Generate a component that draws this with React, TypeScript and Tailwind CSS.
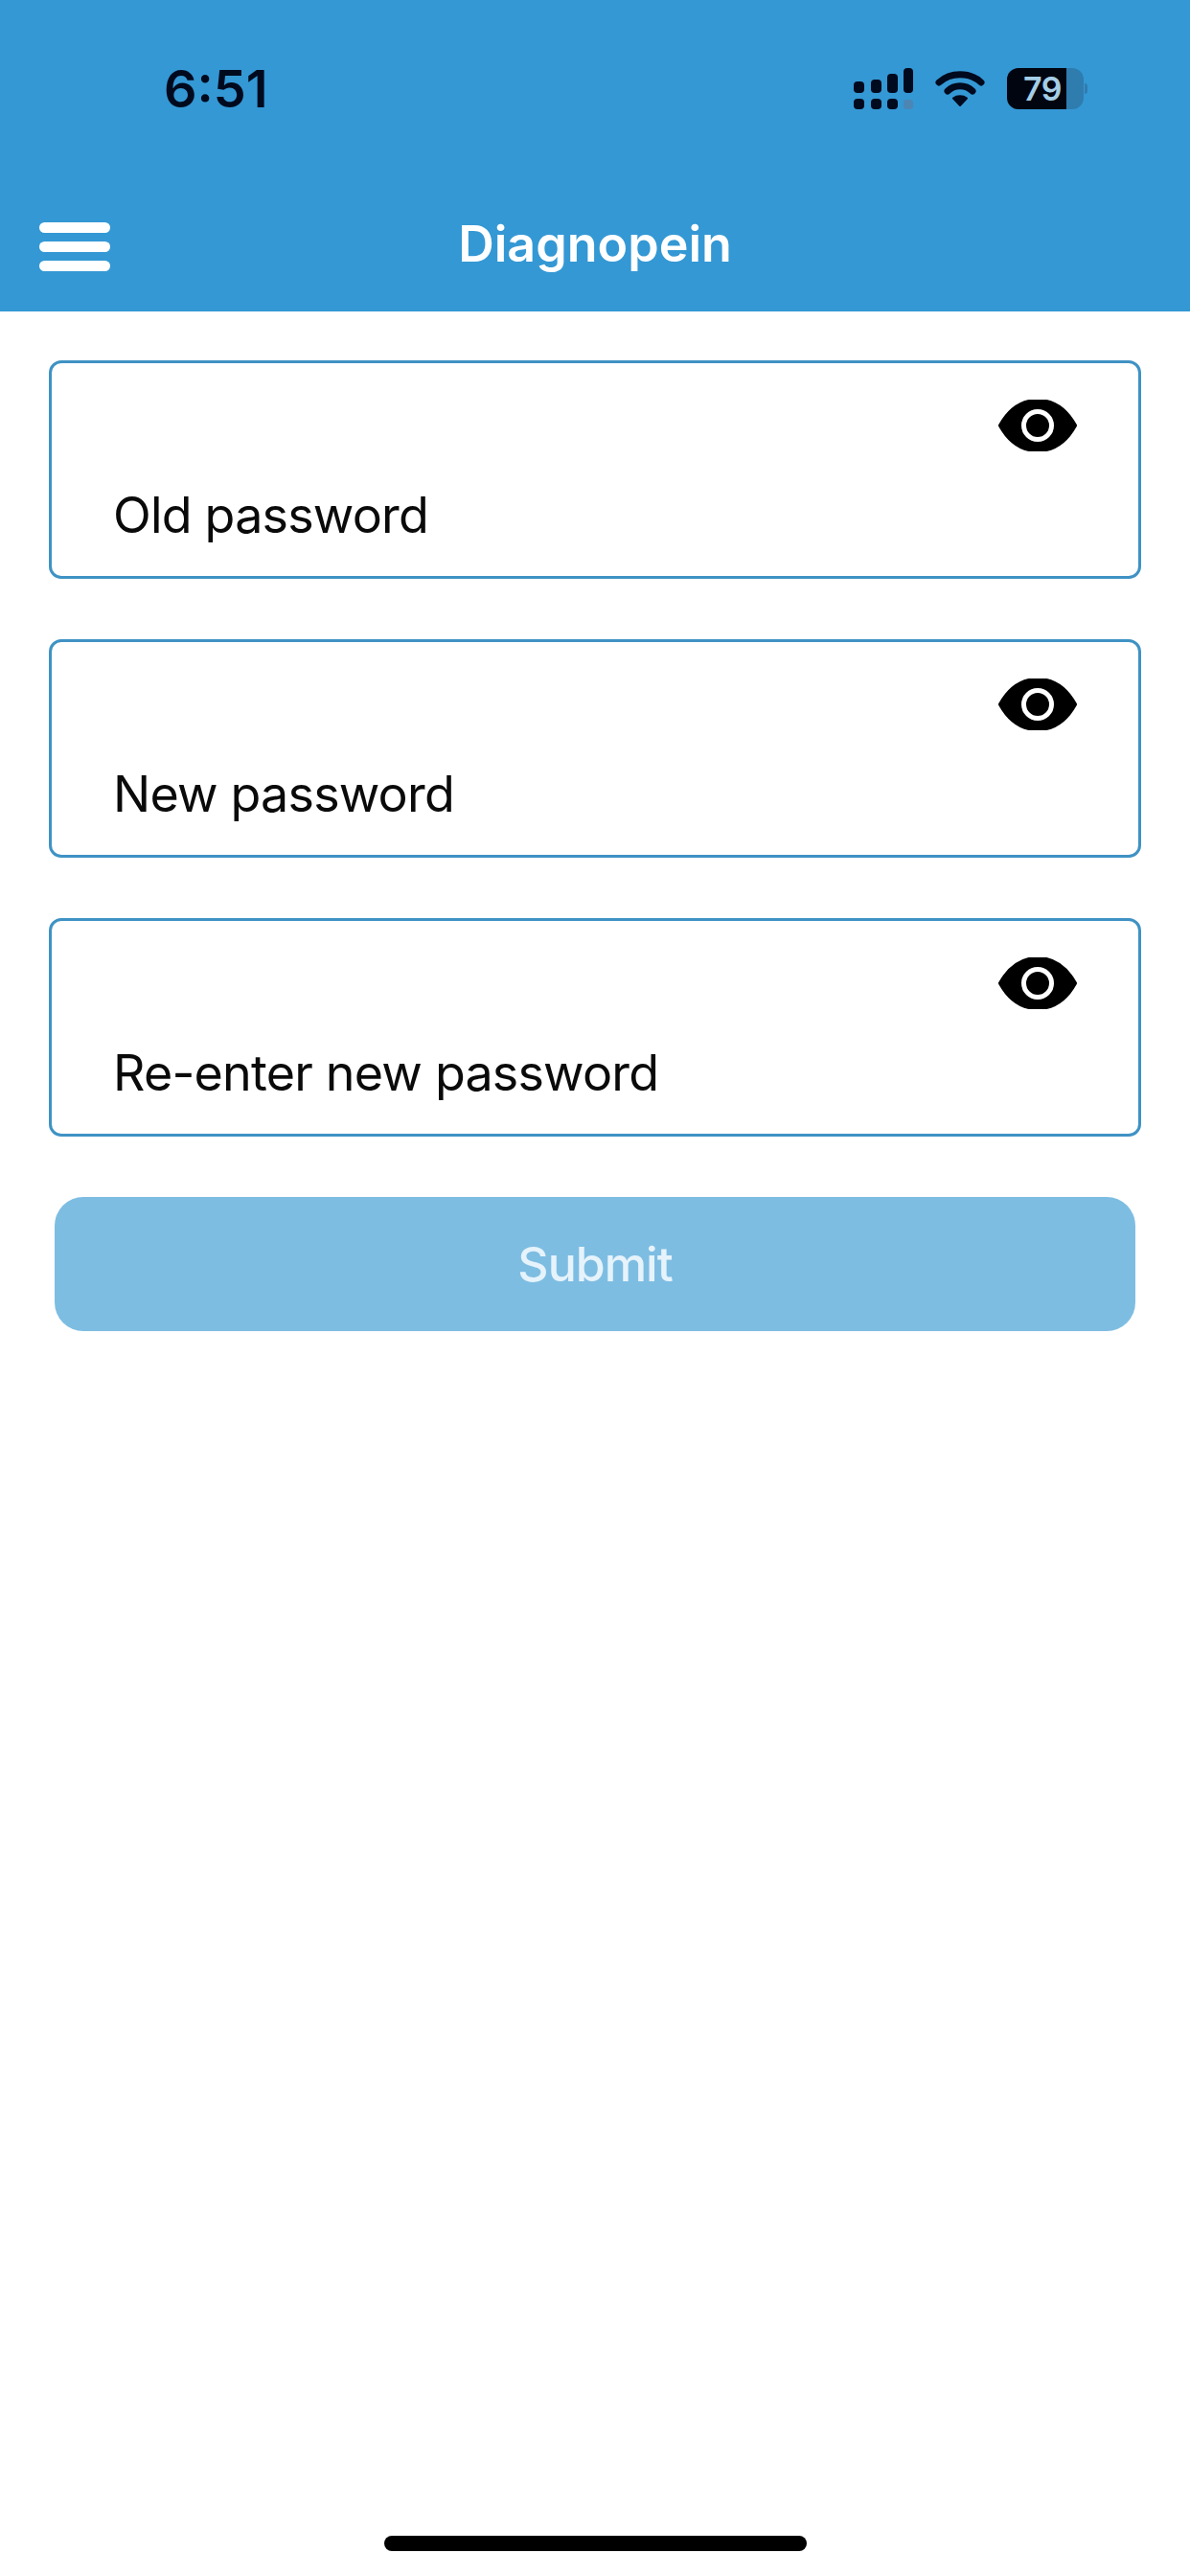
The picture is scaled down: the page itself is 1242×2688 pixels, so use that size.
import React from 'react';

const fields = ['Old password', 'New password', 'Re-enter new password'];

const EyeIcon = () => (
  <svg width="82" height="54" viewBox="0 0 82 54">
    <path d="M2 27 C12 9 26 1 41 1 C56 1 70 9 80 27 C70 45 56 53 41 53 C26 53 12 45 2 27 Z" fill="#000" stroke="#000" strokeLinejoin="round" strokeWidth="4" />
    <circle cx="41" cy="27" r="14.5" fill="none" stroke="#fff" strokeWidth="5" />
  </svg>
);

const SignalIcon = () => (
  <svg width="62" height="43" viewBox="0 0 62 43" fill="#000a1e">
    <rect x="0" y="14" width="11" height="12" rx="4" />
    <rect x="18" y="12" width="11" height="14" rx="4" />
    <rect x="35" y="6" width="11" height="20" rx="4" />
    <rect x="52" y="0" width="10" height="26" rx="4" />
    <rect x="0" y="32" width="11" height="11" rx="4" />
    <rect x="18" y="32" width="11" height="11" rx="4" />
    <rect x="35" y="32" width="11" height="11" rx="4" />
    <rect x="52" y="33" width="10" height="10" rx="3" fill="#4c86b4" />
  </svg>
);

const WifiIcon = () => (
  <svg width="52" height="39" viewBox="0 0 52 39" fill="none" stroke="#000a1e" strokeWidth="7" strokeLinecap="round">
    <path d="M4 13 C16 2 36 2 48 13" />
    <path d="M13 22 C20 15 32 15 39 22" />
    <path d="M26 37 L19 29.5 C23 26.5 29 26.5 33 29.5 Z" fill="#000a1e" stroke="#000a1e" strokeWidth="2" strokeLinejoin="round" />
  </svg>
);

const BatteryIcon = () => (
  <div className="flex items-center">
    <div className="flex h-[43px] w-[80px] overflow-hidden rounded-[12px] bg-[#2f7cae]">
      <div className="flex w-[62px] items-center justify-end bg-[#000510] pr-[5px] text-[34px] font-semibold tracking-[-0.5px] text-[#a5cde6]">
        79
      </div>
    </div>
    <div className="ml-[1px] h-[11px] w-[3px] rounded-r-full bg-[#2f7cae]" />
  </div>
);

export default function App() {
  return (
    <div className="flex min-h-[2688px] flex-col bg-white [font-family:Inter,'Liberation_Sans',sans-serif]">
      <header className="h-[325px] bg-[#3498d4]">
        <div className="flex h-[185px] items-start pl-[171px] pr-[107px] pt-[64px]">
          <span className="text-[54px] leading-[58px] font-semibold text-[#000a1e]">6:51</span>
          <div className="ml-auto flex items-center gap-[23px] pt-[7px]">
            <SignalIcon />
            <WifiIcon />
            <BatteryIcon />
          </div>
        </div>
        <div className="relative flex h-[140px] items-start justify-center pt-[40px]">
          <div className="absolute left-[41px] top-[47px] flex w-[74px] flex-col gap-[9px]">
            <div className="h-[11px] rounded-full bg-white" />
            <div className="h-[11px] rounded-full bg-white" />
            <div className="h-[11px] rounded-full bg-white" />
          </div>
          <span className="text-[52px] leading-[60px] font-semibold text-white">Diagnopein</span>
        </div>
      </header>

      <main className="flex flex-col gap-[63px] px-[51px] pt-[51px]">
        {fields.map((label) => (
          <div key={label} className="flex h-[228px] flex-col rounded-[13px] border-[3px] border-[#3f92c4] bg-white">
            <div className="flex justify-end pr-[64px] pt-[38px]">
              <EyeIcon />
            </div>
            <div className="pl-[64px] pt-[36px] text-[52px] leading-[62px] tracking-[-0.8px] text-[#0a0a0a]">{label}</div>
          </div>
        ))}
      </main>

      <div className="px-[57px] pt-[63px]">
        <button className="h-[140px] w-full rounded-[30px] bg-[#7ebde2] pt-[1px] text-[50px] font-medium tracking-[-1px] text-[#e6f3fb]">
          Submit
        </button>
      </div>

      <div className="mt-auto flex justify-center pb-[26px]">
        <div className="h-[16px] w-[441px] rounded-full bg-black" />
      </div>
    </div>
  );
}
